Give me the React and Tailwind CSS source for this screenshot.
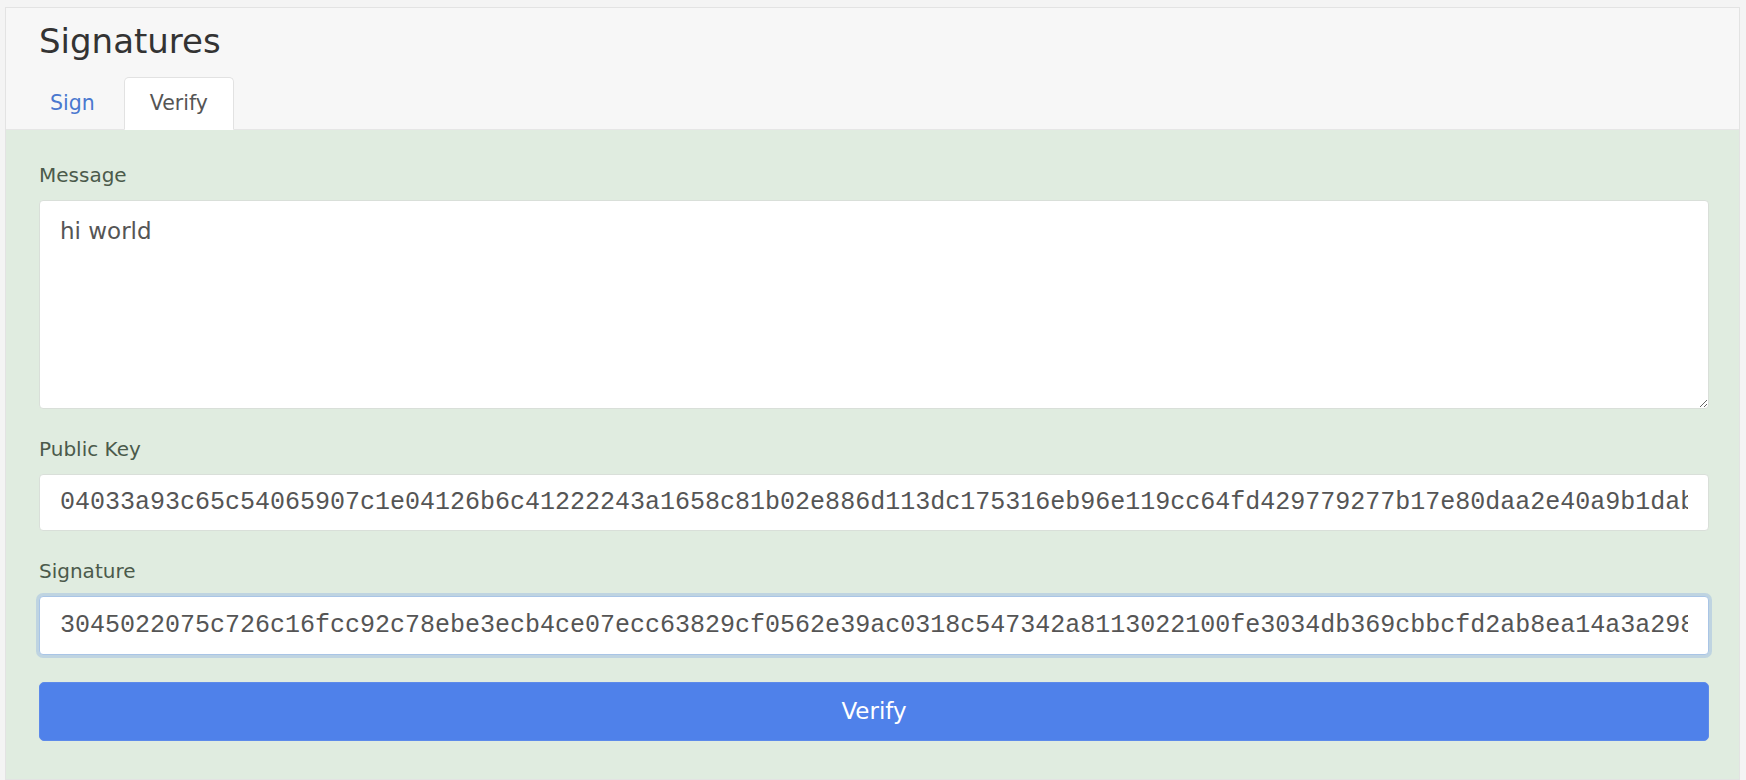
import React from 'react';

const PUBLIC_KEY =
  '04033a93c65c54065907c1e04126b6c41222243a1658c81b02e886d113dc175316eb96e119cc64fd429779277b17e80daa2e40a9b1dab61de5cd5db2ee8b0ffa44';
const SIGNATURE =
  '3045022075c726c16fcc92c78ebe3ecb4ce07ecc63829cf0562e39ac0318c547342a8113022100fe3034db369cbbcfd2ab8ea14a3a2985c0f2a3bb1c2a8a0a';

function Field({ label, children }) {
  return (
    <div className="flex flex-col">
      <label className="text-[20px] leading-[24px] text-[#4b5a4b] mb-[13px]">{label}</label>
      {children}
    </div>
  );
}

export default function App() {
  const [tab, setTab] = React.useState('verify');
  return (
    <div
      className="min-h-[780px] bg-[#f4f4f4] pt-[7px] pl-[5px] pr-[6px]"
      style={{ fontFamily: '"DejaVu Sans", Verdana, sans-serif' }}
    >
      <section className="border border-[#e3e3e3] h-[773px] flex flex-col overflow-hidden">
        <div className="bg-[#f7f7f7] border-b border-[#e6e6e6] pl-[33px] pt-[13px]">
          <h2 className="text-[34px] leading-[41px] text-[#333] font-normal">Signatures</h2>
          <div className="flex items-end gap-[2px] mt-[15px] -ml-[16px] -mb-px">
            <button
              onClick={() => setTab('sign')}
              className={`h-[53px] px-[26px] text-[20.5px] rounded-t-[5px] border ${
                tab === 'sign' ? 'bg-white border-[#e2e2e2] border-b-white text-[#555]' : 'border-transparent text-[#4a78cf]'
              }`}
            >
              Sign
            </button>
            <button
              onClick={() => setTab('verify')}
              className={`h-[53px] px-[25px] text-[20.5px] rounded-t-[5px] border ${
                tab === 'verify' ? 'bg-white border-[#e2e2e2] border-b-white text-[#555]' : 'border-transparent text-[#4a78cf]'
              }`}
            >
              Verify
            </button>
          </div>
        </div>

        <div className="flex-1 bg-[#e0ece0] pl-[33px] pr-[30px] pt-[33px] flex flex-col gap-[28px]">
          <Field label="Message">
            <textarea
              readOnly
              defaultValue="hi world"
              className="h-[209px] bg-white border border-[#d9dfd9] rounded-[4px] px-[20px] py-[14px] text-[23px] leading-[32px] text-[#555] outline-none"
            />
          </Field>
          <Field label="Public Key">
            <input
              readOnly
              value={PUBLIC_KEY}
              className="h-[57px] bg-white border border-[#d9dfd9] rounded-[4px] px-[20px] text-[25px] text-[#555] outline-none"
              style={{ fontFamily: '"Liberation Mono", "Courier New", monospace' }}
            />
          </Field>
          <div className="flex flex-col gap-[27px]">
            <Field label="Signature">
              <input
                readOnly
                value={SIGNATURE}
                className="h-[59px] bg-white border border-[#a9c5e6] rounded-[4px] px-[20px] text-[25px] text-[#555] outline-none shadow-[0_0_0_3px_rgba(130,170,225,0.35)]"
                style={{ fontFamily: '"Liberation Mono", "Courier New", monospace' }}
              />
            </Field>
            <button className="h-[59px] rounded-[5px] bg-[#4f81ea] text-white text-[23px] border border-[#5d8aea]">
              Verify
            </button>
          </div>
        </div>
      </section>
    </div>
  );
}
